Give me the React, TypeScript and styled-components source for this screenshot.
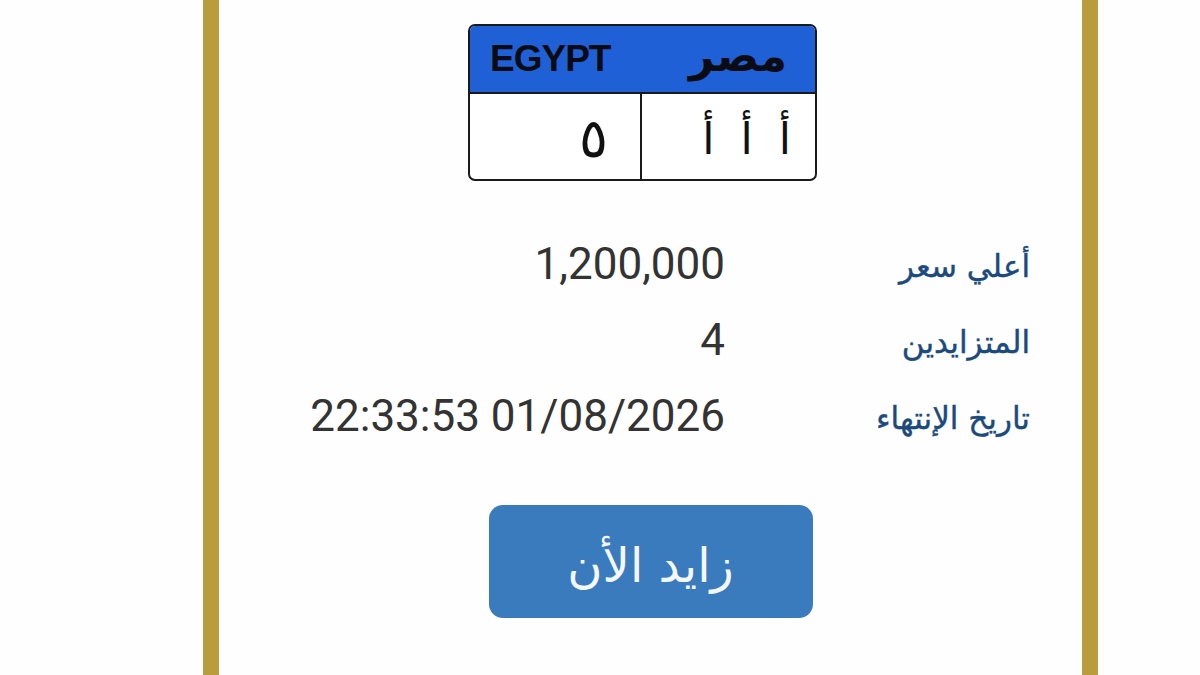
import React from 'react';
import styled, { createGlobalStyle } from 'styled-components';

const GlobalStyle = createGlobalStyle`
  html, body {
    margin: 0;
    padding: 0;
    background: #fefefe;
  }
  * {
    box-sizing: border-box;
  }
`;

const Page = styled.div`
  width: 1200px;
  height: 675px;
  overflow: hidden;
  background: #fefefe;
`;

const Card = styled.div`
  margin-left: 203px;
  width: 895px;
  height: 675px;
  border-left: 16px solid #b99c3c;
  border-right: 16px solid #b99c3c;
  background: #fefefe;
  padding-top: 24px;
  display: flex;
  flex-direction: column;
  align-items: center;
`;

const Plate = styled.div`
  width: 349px;
  height: 157px;
  margin-left: -16px;
  border: 2px solid #1a1a1a;
  border-radius: 7px;
  overflow: hidden;
  display: flex;
  flex-direction: column;
  background: #fff;
`;

const PlateHeader = styled.div`
  height: 68px;
  background: #1f60d6;
  border-bottom: 2px solid #1a1a1a;
  display: flex;
  align-items: center;
  justify-content: space-between;
  padding: 0 28px 0 20px;
`;

const Egypt = styled.span`
  font-family: 'Liberation Sans', Arial, sans-serif;
  font-weight: 700;
  font-size: 37px;
  color: #0b0b14;
  letter-spacing: -1px;
`;

const Misr = styled.span`
  font-family: 'DejaVu Sans', sans-serif;
  font-weight: 700;
  font-size: 44px;
  color: #0b0b14;
  margin-top: -8px;
`;

const PlateBody = styled.div`
  flex: 1;
  display: grid;
  grid-template-columns: 172px 1fr;
`;

const PlateCell = styled.div<{ $divider?: boolean }>`
  display: flex;
  align-items: center;
  justify-content: flex-end;
  padding-right: ${(p) => (p.$divider ? '32px' : '24px')};
  padding-top: 4px;
  border-right: ${(p) => (p.$divider ? '2px solid #1a1a1a' : 'none')};
  font-family: 'DejaVu Sans', sans-serif;
  font-size: ${(p) => (p.$divider ? '54px' : '44px')};
  color: #111;
`;

const Letters = styled.span`
  direction: rtl;
  word-spacing: 12px;
`;

const Details = styled.div`
  margin-top: 56px;
  width: 100%;
  direction: rtl;
  padding-right: 52px;
  display: flex;
  flex-direction: column;
  gap: 23px;
`;

const Row = styled.div`
  display: grid;
  grid-template-columns: 305px 1fr;
  align-items: center;
  height: 53px;
`;

const Label = styled.span`
  font-family: 'DejaVu Sans', sans-serif;
  font-size: 31px;
  color: #1b4a7c;
  padding-top: 4px;
  -webkit-text-stroke: 0.4px #1b4a7c;
`;

const Value = styled.span`
  font-family: Roboto, 'Liberation Sans', sans-serif;
  font-size: 44px;
  color: #333;
  direction: ltr;
  text-align: right;
`;

const BidButton = styled.button`
  margin-top: 63px;
  width: 324px;
  height: 113px;
  border: none;
  border-radius: 14px;
  background: #3a7bbd;
  color: #f4f8fc;
  font-family: 'DejaVu Sans', sans-serif;
  font-size: 48px;
  display: flex;
  align-items: center;
  justify-content: center;
  direction: rtl;
  padding: 6px 0 0;
`;

const rows = [
  { label: 'أعلي سعر', value: '1,200,000' },
  { label: 'المتزايدين', value: '4' },
  { label: 'تاريخ الإنتهاء', value: '22:33:53 01/08/2026' },
];

export default function App() {
  return (
    <Page>
      <GlobalStyle />
      <Card>
        <Plate>
          <PlateHeader>
            <Egypt>EGYPT</Egypt>
            <Misr>مصر</Misr>
          </PlateHeader>
          <PlateBody>
            <PlateCell $divider>٥</PlateCell>
            <PlateCell>
              <Letters>أ أ أ</Letters>
            </PlateCell>
          </PlateBody>
        </Plate>
        <Details>
          {rows.map((r) => (
            <Row key={r.label}>
              <Label>{r.label}</Label>
              <Value>{r.value}</Value>
            </Row>
          ))}
        </Details>
        <BidButton>زايد الأن</BidButton>
      </Card>
    </Page>
  );
}
